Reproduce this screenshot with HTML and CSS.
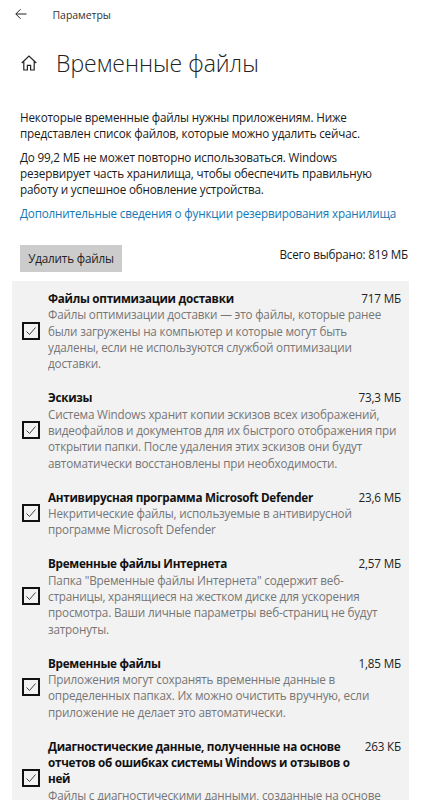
FILE: index.html
```html
<!DOCTYPE html>
<html lang="ru">
<head>
<meta charset="utf-8">
<title>Параметры</title>
<link rel="stylesheet" href="styles.css">
</head>
<body>
<header class="topbar">
  <svg class="back" viewBox="0 0 12 12" width="12" height="12"><path d="M11.5 6H.9M5.6 1.2.8 6l4.8 4.8" fill="none" stroke="#222" stroke-width="1"/></svg>
  <span class="app">Параметры</span>
</header>
<div class="heading">
  <svg class="home" viewBox="0 0 16 16" width="16" height="16"><path d="M.7 8 8 1l7.3 7M2.8 6.4V15h3.6v-4.6h3.2V15h3.6V6.4" fill="none" stroke="#222" stroke-width="1.2"/></svg>
  <h1>Временные файлы</h1>
</div>
<section class="intro">
  <p>Некоторые временные файлы нужны приложениям. Ниже<br>представлен список файлов, которые можно удалить сейчас.</p>
  <p>До 99,2 МБ не может повторно использоваться. Windows<br>резервирует часть хранилища, чтобы обеспечить правильную<br>работу и успешное обновление устройства.</p>
  <a class="link" href="#">Дополнительные сведения о функции резервирования хранилища</a>
</section>
<div class="actions">
  <button class="delete">Удалить файлы</button>
  <span class="total">Всего выбрано: 819 МБ</span>
</div>
<main class="panel">
  <div class="item">
    <svg class="check" viewBox="0 0 18 18" width="18" height="18"><rect x="1" y="1" width="16" height="16" fill="none" stroke="#111" stroke-width="2"/><path d="m4.5 9.5 3 3 6-7" fill="none" stroke="#444" stroke-width="1"/></svg>
    <div class="body">
      <div class="head"><h2>Файлы оптимизации доставки</h2><span class="size">717 МБ</span></div>
      <p>Файлы оптимизации доставки — это файлы, которые ранее<br>были загружены на компьютер и которые могут быть<br>удалены, если не используются службой оптимизации<br>доставки.</p>
    </div>
  </div>
  <div class="item">
    <svg class="check" viewBox="0 0 18 18" width="18" height="18"><rect x="1" y="1" width="16" height="16" fill="none" stroke="#111" stroke-width="2"/><path d="m4.5 9.5 3 3 6-7" fill="none" stroke="#444" stroke-width="1"/></svg>
    <div class="body">
      <div class="head"><h2>Эскизы</h2><span class="size">73,3 МБ</span></div>
      <p>Система Windows хранит копии эскизов всех изображений,<br>видеофайлов и документов для их быстрого отображения при<br>открытии папки. После удаления этих эскизов они будут<br>автоматически восстановлены при необходимости.</p>
    </div>
  </div>
  <div class="item">
    <svg class="check" viewBox="0 0 18 18" width="18" height="18"><rect x="1" y="1" width="16" height="16" fill="none" stroke="#111" stroke-width="2"/><path d="m4.5 9.5 3 3 6-7" fill="none" stroke="#444" stroke-width="1"/></svg>
    <div class="body">
      <div class="head"><h2>Антивирусная программа Microsoft Defender</h2><span class="size">23,6 МБ</span></div>
      <p>Некритические файлы, используемые в антивирусной<br>программе Microsoft Defender</p>
    </div>
  </div>
  <div class="item">
    <svg class="check" viewBox="0 0 18 18" width="18" height="18"><rect x="1" y="1" width="16" height="16" fill="none" stroke="#111" stroke-width="2"/><path d="m4.5 9.5 3 3 6-7" fill="none" stroke="#444" stroke-width="1"/></svg>
    <div class="body">
      <div class="head"><h2>Временные файлы Интернета</h2><span class="size">2,57 МБ</span></div>
      <p>Папка "Временные файлы Интернета" содержит веб-<br>страницы, хранящиеся на жестком диске для ускорения<br>просмотра. Ваши личные параметры веб-страниц не будут<br>затронуты.</p>
    </div>
  </div>
  <div class="item">
    <svg class="check" viewBox="0 0 18 18" width="18" height="18"><rect x="1" y="1" width="16" height="16" fill="none" stroke="#111" stroke-width="2"/><path d="m4.5 9.5 3 3 6-7" fill="none" stroke="#444" stroke-width="1"/></svg>
    <div class="body">
      <div class="head"><h2>Временные файлы</h2><span class="size">1,85 МБ</span></div>
      <p>Приложения могут сохранять временные данные в<br>определенных папках. Их можно очистить вручную, если<br>приложение не делает это автоматически.</p>
    </div>
  </div>
  <div class="item item-tall">
    <svg class="check" viewBox="0 0 18 18" width="18" height="18"><rect x="1" y="1" width="16" height="16" fill="none" stroke="#111" stroke-width="2"/><path d="m4.5 9.5 3 3 6-7" fill="none" stroke="#444" stroke-width="1"/></svg>
    <div class="body">
      <div class="head"><h2>Диагностические данные, полученные на основе<br>отчетов об ошибках системы Windows и отзывов о<br>ней</h2><span class="size">263 КБ</span></div>
      <p>Файлы с диагностическими данными, созданные на основе</p>
    </div>
  </div>
</main>
</body>
</html>
```

FILE: styles.css
```css
* { box-sizing: border-box; }
html, body { margin: 0; height: 800px; overflow: hidden; background: #fff; }
body {
  font-family: "Open Sans", "Noto Sans", sans-serif;
  font-size: 11.7px;
  letter-spacing: -0.18px;
  line-height: 16.33px;
  color: #1a1a1a;
  width: 423px;
}
.topbar { display: flex; align-items: center; height: 30px; padding-left: 14.5px; }
.back { margin-right: 26px; margin-top: -3px; }
.app { font-size: 10.5px; letter-spacing: -0.05px; color: #333; }
.heading { display: flex; align-items: center; height: 44px; margin-top: 11px; padding-left: 21px; }
.home { margin-right: 19px; }
h1 { margin: 0; font-size: 23px; font-weight: 300; letter-spacing: 0; line-height: 44px; color: #222; }
.intro { margin-top: 24px; padding: 0 20px; }
.intro p { margin: 0 0 7px; }
.link { display: block; color: #1478b4; text-decoration: none; white-space: nowrap; margin-top: 7px; }
.actions { display: flex; justify-content: space-between; align-items: flex-start; margin-top: 24px; padding: 0 15px 0 20px; }
.delete { width: 102px; height: 27px; padding: 0; border: 0; background: #ccc; color: #222; font: inherit; letter-spacing: inherit; }
.total { margin-top: 1px; }
.panel { margin: 9px 14px 0 12px; padding-top: 9px; background: #f2f2f2; height: 520px; overflow: hidden; }
.item { display: flex; align-items: center; margin-bottom: 17.7px; padding: 0 8px 0 10px; }
.item-tall { min-height: 81.7px; }
.item-tall .body { align-self: flex-start; }
.check { flex: none; margin-right: 8px; }
.body { flex: 1; min-width: 0; }
.head { display: flex; justify-content: space-between; align-items: flex-start; }
h2 { margin: 0; font-size: 11.7px; font-weight: 700; letter-spacing: -0.28px; color: #111; white-space: nowrap; }
.size { flex: none; color: #222; }
.body p { margin: 0; color: #767676; white-space: nowrap; }
```
